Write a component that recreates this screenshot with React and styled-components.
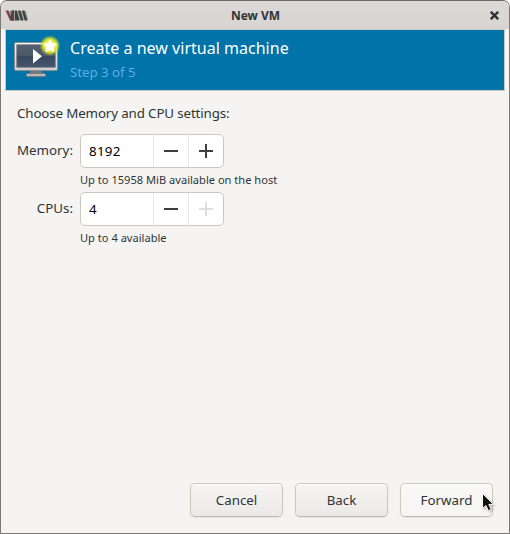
import React from "react";
import styled, { createGlobalStyle } from "styled-components";

const GlobalStyle = createGlobalStyle`
  * { box-sizing: border-box; }
  body { margin: 0; background: #fff; }
`;

const Window = styled.main`
  width: 510px;
  height: 534px;
  display: flex;
  flex-direction: column;
  position: relative;
  overflow: hidden;
  border: 1px solid #7b7876;
  border-top-color: #6d6765;
  border-radius: 7px 7px 1px 1px;
  background: #f5f4f3;
  color: #2e3436;
  font: 13.33px/18px "Noto Sans", sans-serif;
  white-space: nowrap;
`;

const TitleBar = styled.header`
  height: 28px;
  flex: none;
  display: grid;
  grid-template-columns: 30px 1fr 29px;
  align-items: center;
  background: linear-gradient(#dcd8d5, #d8d4d1);
`;

const AppIcon = styled.svg`
  width: 24px;
  height: 13px;
  margin: 1px 0 0 4px;
`;

const WindowTitle = styled.h1`
  margin: 1px 0 0;
  font-size: 12px;
  line-height: 18px;
  font-weight: 700;
  text-align: center;
`;

const CloseButton = styled.button`
  border: 0;
  padding: 1px 0 0 10px;
  background: none;
  display: flex;
  color: #2e3436;
`;

const Banner = styled.section`
  height: 62px;
  flex: none;
  margin: 0 4px;
  padding: 6px 8px;
  border: 1px solid #cdc7c2;
  background: #0073a9;
  display: flex;
  gap: 10px;
`;

const MonitorIcon = styled.svg`
  width: 46px;
  height: 46px;
  flex: none;
  overflow: visible;
`;

const BannerText = styled.div`
  display: flex;
  flex-direction: column;
`;

const BannerTitle = styled.h2`
  margin: 0 0 1px;
  font-size: 16px;
  line-height: 24px;
  font-weight: 400;
  letter-spacing: 0.02px;
  color: #fff;
`;

const Step = styled.span`
  line-height: 22px;
  letter-spacing: -0.06px;
  color: #59b0e1;
`;

const Content = styled.section`
  flex: 1;
  padding: 13px 16px 0;
`;

const Intro = styled.p`
  margin: 0 0 12px;
  letter-spacing: -0.13px;
`;

const Settings = styled.div`
  display: grid;
  grid-template-columns: 56px 144px;
  grid-template-rows: 34px 24px 34px 24px;
  column-gap: 7px;
`;

const Label = styled.label`
  justify-self: end;
  padding-top: 7px;
`;

const SpinBox = styled.div`
  display: grid;
  grid-template-columns: 72px 35px 35px;
  border: 1px solid #cdc7c2;
  border-radius: 5px;
  background: #fff;
  overflow: hidden;
`;

const Value = styled.span`
  padding: 7px 8px;
  color: #000;
  letter-spacing: 0.3px;
`;

const StepButton = styled.button`
  border: 0;
  border-left: 1px solid #e9e7e5;
  padding: 0;
  background: none;
  color: ${(p) => (p.disabled ? "#dcdddd" : "#3a4043")};
  display: flex;
  align-items: center;
  justify-content: center;
`;

const Hint = styled.span`
  grid-column: 2;
  padding-top: 4px;
  font-size: 11.1px;
  line-height: 16px;
`;

const Actions = styled.footer`
  display: flex;
  justify-content: flex-end;
  gap: 12px;
  padding: 0 16px 16px;
`;

const ActionButton = styled.button`
  width: 93px;
  height: 34px;
  padding: 0;
  border: 1px solid #cdc7c2;
  border-bottom-color: #bfb8b1;
  border-radius: 5px;
  background: ${(p) => (p.$hovered ? "linear-gradient(#f8f8f7, #f6f5f4)" : "linear-gradient(#f6f5f3, #eae9e7)")};
  box-shadow: inset 0 1px #fff, 0 1px 2px rgba(0, 0, 0, 0.07);
  color: #2e3436;
  font: inherit;
`;

const Pointer = styled.svg`
  position: absolute;
  left: 480px;
  top: 491px;
  width: 15px;
  height: 21px;
  filter: drop-shadow(1px 1px 1px rgba(0, 0, 0, 0.3));
`;

function StepGlyph({ plus }) {
  return (
    <svg width="14" height="14" viewBox="0 0 14 14" fill="currentColor" shapeRendering="crispEdges">
      <path d={plus ? "M0 6h6V0h2v6h6v2H8v6H6V8H0z" : "M0 6h14v2H0z"} />
    </svg>
  );
}

function SpinRow({ label, value, hint, atMaximum }) {
  return (
    <>
      <Label>{label}</Label>
      <SpinBox>
        <Value>{value}</Value>
        <StepButton aria-label="Decrease"><StepGlyph /></StepButton>
        <StepButton aria-label="Increase" disabled={atMaximum}><StepGlyph plus /></StepButton>
      </SpinBox>
      <Hint>{hint}</Hint>
    </>
  );
}

function VmLogo() {
  return (
    <AppIcon viewBox="0 0 24 13">
      <path d="M4 2h17l2 9H6z" fill="#8b8a88" />
      <path d="M.5 1.5h3l2 5 1-5h2.5v10H5z" fill="#7d3848" stroke="#b79aa0" strokeWidth=".6" />
      <path d="M7 1.5h2v10H5.5z" fill="#4b4345" />
      <path d="M9.5 1.5h2.5l2.5 10H9.5zM13 1.5h2.5l3 10h-3zM17 1.5h2.5l3 10h-3z" fill="#3f4443" />
      <path d="M9.5 2v9M12.7 2l2.5 9M16.3 2l2.8 9M20.2 2l2.8 9" fill="none" stroke="#b3b2af" strokeWidth=".8" />
    </AppIcon>
  );
}

function NewMachineIcon() {
  return (
    <MonitorIcon viewBox="0 0 46 46">
      <defs>
        <radialGradient id="glow">
          <stop offset="0" stopColor="#fffbcf" />
          <stop offset=".5" stopColor="#f2ee38" />
          <stop offset=".7" stopColor="#dce32a" stopOpacity=".85" />
          <stop offset="1" stopColor="#9cc928" stopOpacity="0" />
        </radialGradient>
        <linearGradient id="screen" x2="0" y2="1">
          <stop stopColor="#536071" />
          <stop offset=".48" stopColor="#4b5867" />
          <stop offset=".5" stopColor="#38475a" />
          <stop offset="1" stopColor="#46566e" />
        </linearGradient>
        <linearGradient id="frame" x2="0" y2="1">
          <stop stopColor="#f8f8f8" />
          <stop offset="1" stopColor="#cfcfd0" />
        </linearGradient>
      </defs>
      <path d="M16 34h12v4H16z" fill="#74797c" />
      <rect x="12.5" y="37.5" width="19" height="3" rx="1" fill="#b8b9b9" stroke="#737b80" />
      <rect x=".5" y="6.5" width="43" height="28" rx="1.5" fill="url(#frame)" stroke="#8b8e91" />
      <rect x="2.8" y="8.8" width="38.4" height="22.4" fill="url(#screen)" stroke="#626b75" strokeWidth=".7" />
      <path d="M19 13l9 7.2-9 7.3z" fill="#fff" />
      <circle cx="36" cy="9.7" r="10.5" fill="url(#glow)" />
      <path d="M36 4l1.8 3.7 4.2.5-3 3 .7 4.1-3.7-1.9-3.7 1.9.7-4.1-3-3 4.2-.5z" fill="#fff" stroke="#fff" strokeWidth="1.2" strokeLinejoin="round" />
    </MonitorIcon>
  );
}

export default function App() {
  return (
    <>
      <GlobalStyle />
      <Window>
        <TitleBar>
          <VmLogo />
          <WindowTitle>New VM</WindowTitle>
          <CloseButton aria-label="Close">
            <svg width="9" height="9" viewBox="0 0 9 9" fill="none" stroke="currentColor" strokeWidth="2.4">
              <path d="M.8.8l7.4 7.4M8.2.8L.8 8.2" />
            </svg>
          </CloseButton>
        </TitleBar>
        <Banner>
          <NewMachineIcon />
          <BannerText>
            <BannerTitle>Create a new virtual machine</BannerTitle>
            <Step>Step 3 of 5</Step>
          </BannerText>
        </Banner>
        <Content>
          <Intro>Choose Memory and CPU settings:</Intro>
          <Settings>
            <SpinRow label="Memory:" value="8192" hint="Up to 15958 MiB available on the host" />
            <SpinRow label="CPUs:" value="4" hint="Up to 4 available" atMaximum />
          </Settings>
        </Content>
        <Actions>
          <ActionButton>Cancel</ActionButton>
          <ActionButton>Back</ActionButton>
          <ActionButton $hovered>Forward</ActionButton>
        </Actions>
        <Pointer viewBox="0 0 15 21">
          <path d="M1.5 1.5v15l3.4-3 2.4 5.2 3-1.3-2.5-5h4.7z" fill="#111" stroke="#fff" />
        </Pointer>
      </Window>
    </>
  );
}
